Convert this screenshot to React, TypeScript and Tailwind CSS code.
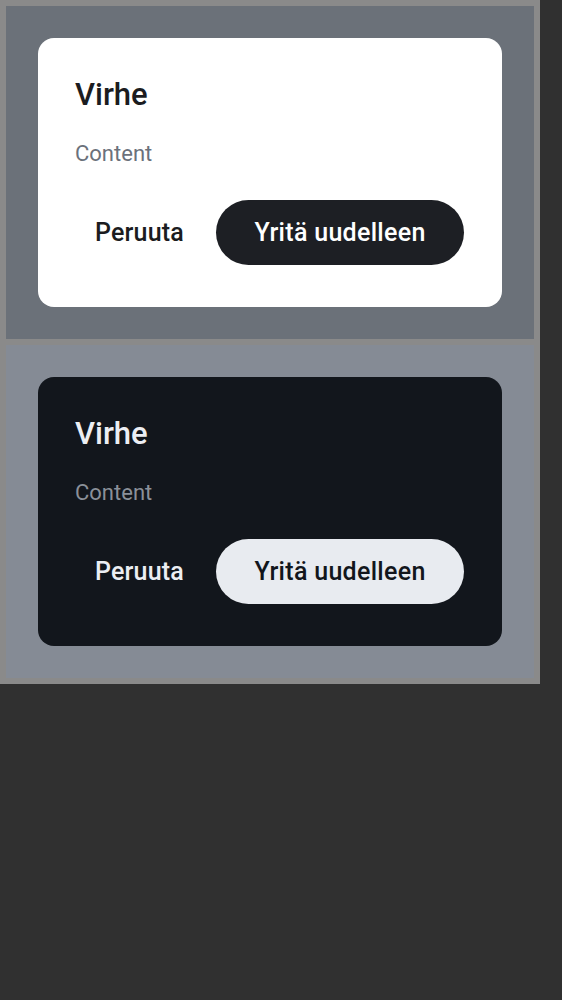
import React from "react"

// Two error dialogs, light and dark, stacked in a gray frame.

function ErrorDialog({ dark }: { dark?: boolean }) {
  return (
    <div className={dark ? "h-[333px] bg-[#858b95] p-8" : "h-[333px] bg-[#6b7179] p-8"}>
      <div
        className={
          dark
            ? "flex h-full flex-col rounded-[16px] bg-[#12161c] pl-[37px] pr-[38px] pt-[39px] pb-[42px]"
            : "flex h-full flex-col rounded-[16px] bg-white pl-[37px] pr-[38px] pt-[39px] pb-[42px]"
        }
      >
        <h2 className={dark ? "text-[31px] leading-[36px] font-medium text-[#eceef3]" : "text-[31px] leading-[36px] font-medium text-[#1b1c20]"}>
          Virhe
        </h2>
        <p className={dark ? "mt-[27px] text-[22px] leading-[28px] text-[#8a9099]" : "mt-[27px] text-[22px] leading-[28px] text-[#6b717b]"}>
          Content
        </p>
        <div className="mt-auto flex items-center justify-end gap-[12px]">
          <button className={dark ? "h-[65px] shrink-0 rounded-full px-[20px] text-[25px] tracking-[0.2px] font-medium text-[#eceef3]" : "h-[65px] shrink-0 rounded-full px-[20px] text-[25px] tracking-[0.2px] font-medium text-[#1b1c20]"}>
            Peruuta
          </button>
          <button
            className={
              dark
                ? "h-[65px] w-[248px] shrink-0 rounded-full bg-[#e8ebf0] text-[25px] tracking-[0.3px] font-medium text-[#12161c]"
                : "h-[65px] w-[248px] shrink-0 rounded-full bg-[#1d1f24] text-[25px] tracking-[0.3px] font-medium text-white"
            }
          >
            Yritä uudelleen
          </button>
        </div>
      </div>
    </div>
  )
}

export default function App() {
  return (
    <div className="min-h-[1000px] bg-[#303030]" style={{ fontFamily: "Roboto, sans-serif" }}>
      <div className="flex w-[540px] flex-col gap-[6px] bg-[#8a8a8a] p-[6px]">
        <ErrorDialog />
        <ErrorDialog dark />
      </div>
    </div>
  )
}
